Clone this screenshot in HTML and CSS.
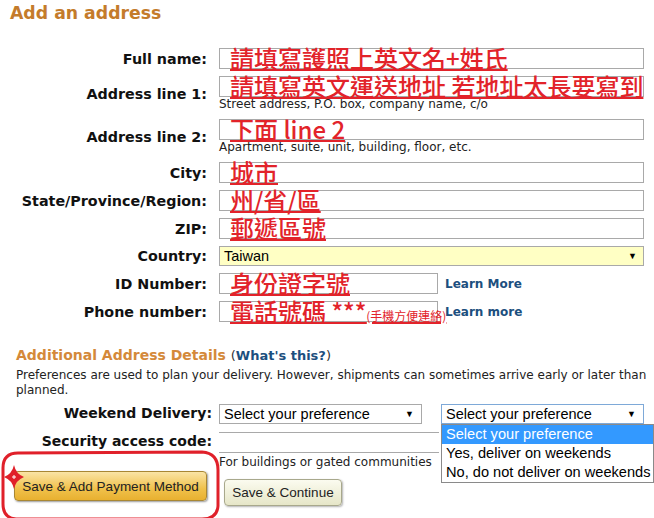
FILE: index.html
```html
<!DOCTYPE html>
<html lang="zh-Hant">
<head>
    <meta charset="UTF-8">
    <meta name="viewport" content="width=device-width, initial-scale=1.0">
    <title>Add an address</title>
    <link rel="stylesheet" href="styles.css">
</head>
<body>

    <div class="page">
        <h1 class="page-title">Add an address</h1>

        <div class="address-form">
            <div class="field-label">Full name:</div>
            <div class="field">
                <div class="text-box"><span class="note">請填寫護照上英文名+姓氏</span></div>
            </div>

            <div class="field-label">Address line 1:</div>
            <div class="field">
                <div class="text-box"><span class="note">請填寫英文運送地址 若地址太長要寫到</span></div>
                <div class="hint">Street address, P.O. box, company name, c/o</div>
            </div>

            <div class="field-label">Address line 2:</div>
            <div class="field">
                <div class="text-box"><span class="note">下面 line 2</span></div>
                <div class="hint">Apartment, suite, unit, building, floor, etc.</div>
            </div>

            <div class="field-label">City:</div>
            <div class="field">
                <div class="text-box"><span class="note">城市</span></div>
            </div>

            <div class="field-label">State/Province/Region:</div>
            <div class="field">
                <div class="text-box"><span class="note">州/省/區</span></div>
            </div>

            <div class="field-label">ZIP:</div>
            <div class="field">
                <div class="text-box"><span class="note">郵遞區號</span></div>
            </div>

            <div class="field-label">Country:</div>
            <div class="field">
                <div class="country-select">
                    <span>Taiwan</span>
                    <span class="arrow">▼</span>
                </div>
            </div>

            <div class="field-label">ID Number:</div>
            <div class="field field-inline">
                <div class="text-box short"><span class="note">身份證字號</span></div>
                <a class="learn-link" href="#">Learn More</a>
            </div>

            <div class="field-label">Phone number:</div>
            <div class="field field-inline">
                <div class="text-box short"><span class="note">電話號碼 ***<small>(手機方便連絡)</small></span></div>
                <a class="learn-link" href="#">Learn more</a>
            </div>
        </div>

        <h2 class="section-title">Additional Address Details <span class="paren">(<a href="#">What's this?</a>)</span></h2>
        <p class="section-text">Preferences are used to plan your delivery. However, shipments can sometimes arrive early or later than planned.</p>

        <div class="pref-form">
            <div class="pref-label">Weekend Delivery:</div>
            <div class="pref-row">
                <div class="pref-select">
                    <span>Select your preference</span>
                    <span class="arrow">▼</span>
                </div>
                <div class="pref-select open">
                    <span>Select your preference</span>
                    <span class="arrow">▼</span>
                    <ul class="options">
                        <li class="selected">Select your preference</li>
                        <li>Yes, deliver on weekends</li>
                        <li>No, do not deliver on weekends</li>
                    </ul>
                </div>
            </div>

            <div class="pref-label">Security access code:</div>
            <div class="field">
                <div class="code-box"></div>
                <div class="hint code-hint">For buildings or gated communities</div>
            </div>
        </div>

        <div class="actions">
            <button class="btn btn-primary">Save &amp; Add Payment Method</button>
            <button class="btn btn-secondary">Save &amp; Continue</button>
        </div>

        <svg class="marker" width="224" height="70" viewBox="0 0 224 70">
            <path d="M18 3 L202 2 Q218 3 218 20 L218 56 Q217 69 202 69 L16 69 Q3 68 3 54 L3 18 Q3 3 18 3 Z" fill="none" stroke="#e0202a" stroke-width="3"/>
            <path d="M14 15 Q16 24 24 27 Q16 30 14 39 Q12 30 4 27 Q12 24 14 15 Z" fill="#e0202a"/>
            <path d="M12 27 H16 M14 25 V29" stroke="#fff" stroke-width="1"/>
        </svg>
    </div>

</body>
</html>
```

FILE: styles.css
```css
/* General */
body {
    margin: 0;
    background-color: #fff;
    color: #000;
    font-family: 'DejaVu Sans', Verdana, sans-serif;
}

.page {
    position: relative;
    padding: 0 10px;
    height: 518px;
    overflow: hidden;
}

.page-title {
    margin: 0;
    padding-top: 2px;
    font-size: 17.3px;
    line-height: 22px;
    color: #c47b2b;
}

/* Address form */
.address-form {
    display: grid;
    grid-template-columns: 197px 425px;
    column-gap: 12px;
    row-gap: 7px;
    margin-top: 24px;
}

.field-label {
    align-self: center;
    text-align: right;
    font-size: 14.3px;
    font-weight: bold;
    color: #111;
}

.field-inline {
    display: flex;
    align-items: center;
    gap: 7px;
}

.text-box {
    position: relative;
    height: 19px;
    border: 1px solid #a9a9a9;
    background-color: #fff;
}

.text-box.short {
    width: 217px;
}

/* red notes written over the inputs */
.note {
    position: absolute;
    left: 10px;
    top: -4px;
    white-space: nowrap;
    font-family: 'Noto Sans CJK TC', 'Noto Sans', sans-serif;
    font-size: 24px;
    font-weight: 500;
    line-height: 26px;
    color: #e2232a;
    text-decoration: underline;
    text-decoration-thickness: 2px;
}

.note small {
    font-size: 12px;
    font-weight: normal;
    text-decoration-thickness: 1px;
}

.hint {
    font-size: 12px;
    line-height: 15px;
    color: #222;
}

.country-select {
    display: flex;
    justify-content: space-between;
    align-items: center;
    height: 18px;
    padding: 0 6px 0 4px;
    border: 1px solid #a9a9a9;
    background-color: #ffffc4;
    font-family: 'Liberation Sans', Arial, sans-serif;
    font-size: 14.5px;
}

.arrow {
    font-size: 9px;
}

.learn-link {
    font-size: 12px;
    font-weight: bold;
    color: #1c4f7e;
    text-decoration: none;
}

/* Additional details */
.section-title {
    margin: 24px 0 0 6px;
    font-size: 14px;
    line-height: 18px;
    color: #d4893a;
}

.paren {
    font-size: 13px;
    font-weight: normal;
    color: #333;
}

.paren a {
    font-weight: bold;
    color: #1c4f7e;
    text-decoration: none;
}

.section-text {
    margin: 3px -10px 0 6px;
    font-size: 12px;
    line-height: 15px;
    color: #222;
}

.pref-form {
    display: grid;
    grid-template-columns: 202px 425px;
    column-gap: 7px;
    row-gap: 8px;
    margin-top: 6px;
}

.pref-label {
    align-self: start;
    text-align: right;
    font-size: 14px;
    font-weight: bold;
    line-height: 19px;
    color: #111;
}

.pref-row {
    display: flex;
    gap: 19px;
}

.pref-select {
    position: relative;
    display: flex;
    justify-content: space-between;
    align-items: center;
    width: 193px;
    height: 18px;
    padding: 0 7px 0 4px;
    border: 1px solid #a9a9a9;
    font-family: 'Liberation Sans', Arial, sans-serif;
    font-size: 14.5px;
    background-color: #fff;
}

.pref-select.open {
    border-color: #7ea9d8;
}

.options {
    position: absolute;
    left: -1px;
    top: 19px;
    width: 211px;
    margin: 0;
    padding: 0;
    list-style: none;
    border: 1px solid #8a8a8a;
    background-color: #fff;
    z-index: 2;
}

.options li {
    height: 19px;
    line-height: 19px;
    padding-left: 4px;
    font-size: 14.6px;
}

.options li.selected {
    background-color: #3399ff;
    color: #fff;
}

.code-box {
    width: 220px;
    height: 19px;
    border-top: 1px solid #a9a9a9;
    border-bottom: 1px solid #a9a9a9;
}

.code-hint {
    margin-top: 2px;
}

/* Buttons */
.actions {
    display: flex;
    align-items: flex-start;
    gap: 17px;
    margin-top: 1px;
    padding-left: 4px;
}

.btn {
    font-family: 'Liberation Sans', Arial, sans-serif;
    font-size: 13.5px;
    color: #222;
    cursor: pointer;
}

.btn-primary {
    width: 193px;
    height: 30px;
    border: 1px solid #a88734;
    border-radius: 4px;
    background: linear-gradient(#fae4a5, #f0c14b 60%, #e8b030);
    box-shadow: 1px 1px 2px rgba(0, 0, 0, 0.4);
}

.btn-secondary {
    width: 118px;
    height: 27px;
    margin-top: 8px;
    border: 1px solid #a8a88c;
    border-radius: 4px;
    background: linear-gradient(#fbfbef, #e6e6c8);
    box-shadow: 1px 1px 2px rgba(0, 0, 0, 0.3);
}

.marker {
    position: absolute;
    left: 0;
    top: 450px;
}
```
